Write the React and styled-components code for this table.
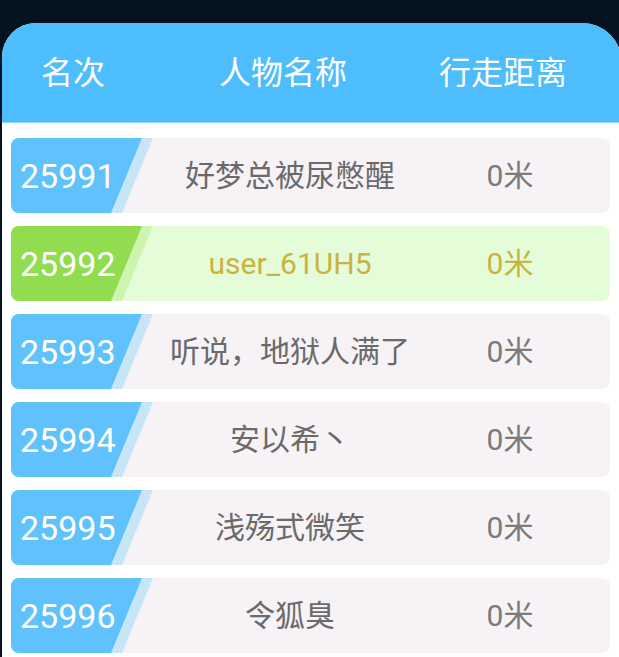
import styled, { createGlobalStyle } from "styled-components";

const GlobalStyle = createGlobalStyle`
  html, body {
    margin: 0;
    padding: 0;
    background: #04131f;
    overflow: hidden;
  }
  body {
    font-family: Roboto, "Noto Sans CJK SC", sans-serif;
  }
`;

const rows = [
  { rank: 25991, name: "好梦总被尿憋醒", dist: "0米" },
  { rank: 25992, name: "user_61UH5", dist: "0米", self: true },
  { rank: 25993, name: "听说，地狱人满了", dist: "0米" },
  { rank: 25994, name: "安以希丶", dist: "0米" },
  { rank: 25995, name: "浅殇式微笑", dist: "0米" },
  { rank: 25996, name: "令狐臭", dist: "0米" },
];

const Screen = styled.div`
  height: 657px;
  padding-top: 23px;
  box-sizing: border-box;
`;

const Panel = styled.div`
  margin-left: 2px;
  width: 620px;
  height: 634px;
  background: #ffffff;
  border-radius: 34px 40px 0 0;
  overflow: hidden;
`;

const Header = styled.div`
  height: 100px;
  background: #4dbdfd;
  border-bottom: 1px solid #8fd6fd;
  box-sizing: border-box;
  display: grid;
  grid-template-columns: 142px 278px 162px 1fr;
  align-items: center;
  color: #ffffff;
  font-size: 32px;
  line-height: 1;
`;

const HeadCell = styled.div`
  text-align: center;
`;

const List = styled.div`
  padding: 15px 12px 0 9px;
  display: flex;
  flex-direction: column;
  gap: 13px;
`;

const Row = styled.div`
  height: 75px;
  border-radius: 8px;
  overflow: hidden;
  background: ${(p) => (p.$self ? "#e5fcd9" : "#f6f2f6")};
  display: grid;
  grid-template-columns: 142px 274px 166px 1fr;
  align-items: center;
`;

const Badge = styled.div`
  height: 100%;
  background: ${(p) => (p.$self ? "#cdf5ad" : "#c6e6f8")};
  clip-path: polygon(0 0, 142px 0, 111px 100%, 0 100%);
`;

const BadgeFill = styled.div`
  height: 100%;
  background: ${(p) => (p.$self ? "#92dd4f" : "#5fc2fc")};
  clip-path: polygon(0 0, 131px 0, 100px 100%, 0 100%);
  display: flex;
  align-items: center;
  padding-left: 9px;
  color: #ffffff;
  font-size: 34px;
  line-height: 1;
`;

const Cell = styled.div`
  text-align: center;
  font-size: 30px;
  line-height: 1;
  white-space: nowrap;
  color: ${(p) => (p.$self ? "#c9b43f" : p.$dim ? "#7a7a7a" : "#6a6a6a")};
`;

export default function App() {
  return (
    <Screen>
      <GlobalStyle />
      <Panel>
        <Header>
          <HeadCell>名次</HeadCell>
          <HeadCell>人物名称</HeadCell>
          <HeadCell>行走距离</HeadCell>
        </Header>
        <List>
          {rows.map((r) => (
            <Row key={r.rank} $self={r.self}>
              <Badge $self={r.self}>
                <BadgeFill $self={r.self}>{r.rank}</BadgeFill>
              </Badge>
              <Cell $self={r.self}>{r.name}</Cell>
              <Cell $self={r.self} $dim>
                {r.dist}
              </Cell>
            </Row>
          ))}
        </List>
      </Panel>
    </Screen>
  );
}
